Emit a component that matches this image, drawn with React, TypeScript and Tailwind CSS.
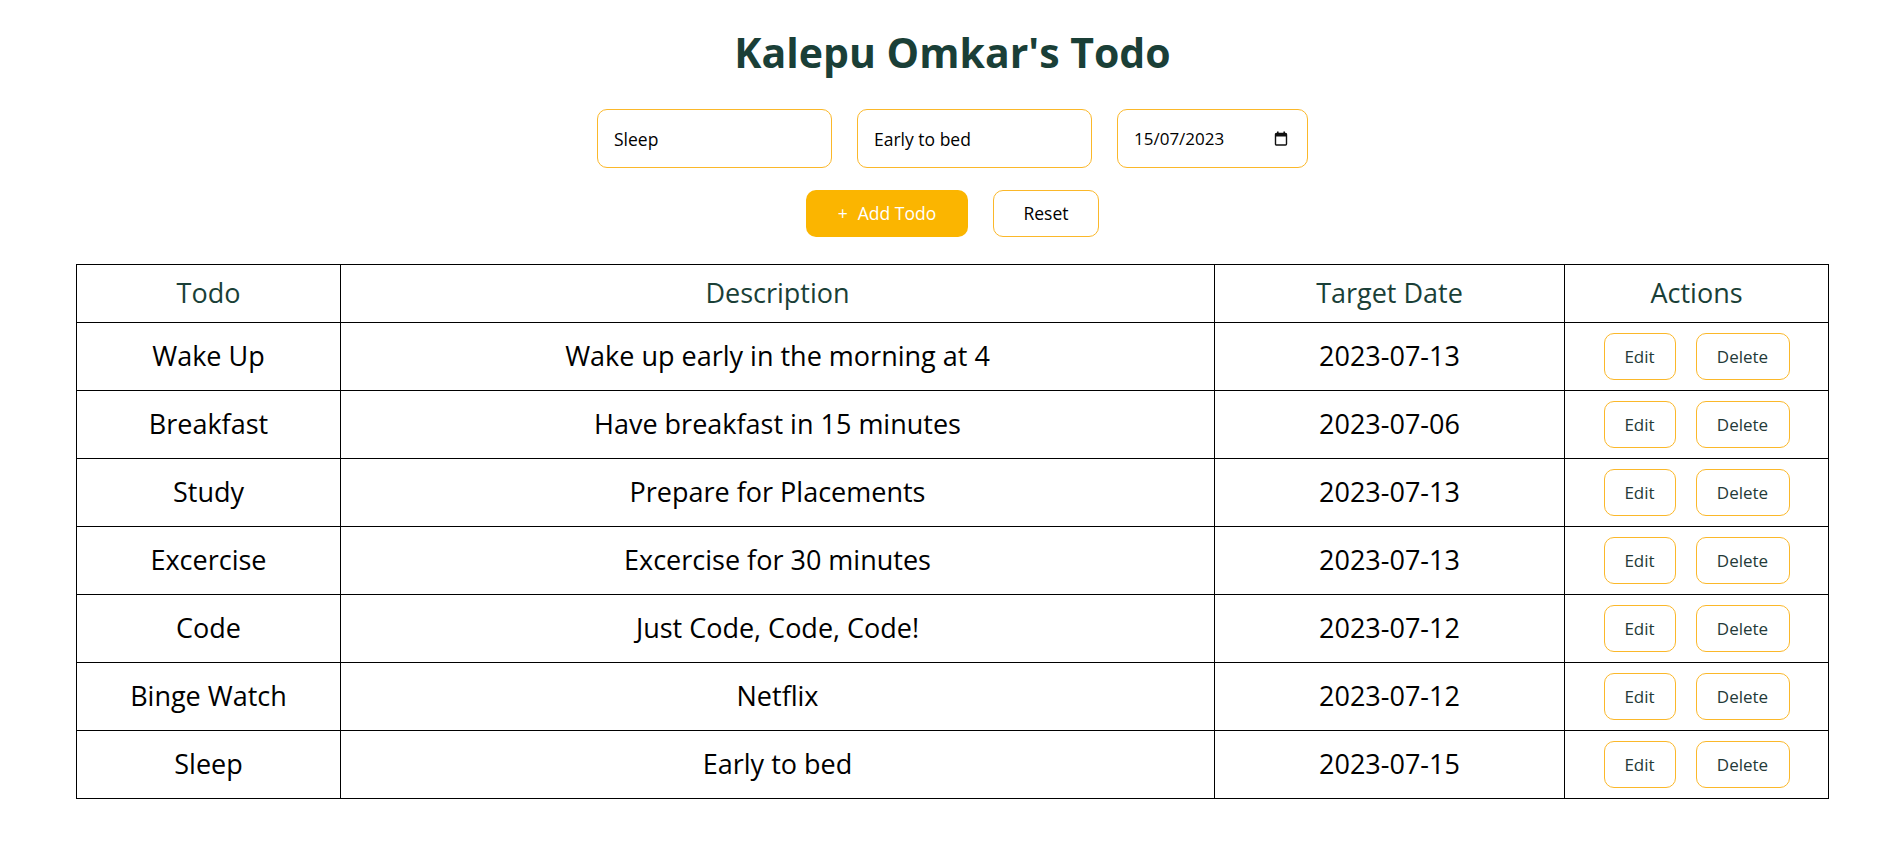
import React from "react";

const rows = [
  { todo: "Wake Up", desc: "Wake up early in the morning at 4", date: "2023-07-13" },
  { todo: "Breakfast", desc: "Have breakfast in 15 minutes", date: "2023-07-06" },
  { todo: "Study", desc: "Prepare for Placements", date: "2023-07-13" },
  { todo: "Excercise", desc: "Excercise for 30 minutes", date: "2023-07-13" },
  { todo: "Code", desc: "Just Code, Code, Code!", date: "2023-07-12" },
  { todo: "Binge Watch", desc: "Netflix", date: "2023-07-12" },
  { todo: "Sleep", desc: "Early to bed", date: "2023-07-15" },
];

function CalendarIcon() {
  return (
    <svg width="14" height="15" viewBox="0 0 14 15" fill="none">
      <rect x="1.5" y="2.5" width="11" height="11.5" rx="1" stroke="#111" strokeWidth="1.4" />
      <rect x="1.5" y="2.5" width="11" height="3" fill="#111" />
      <rect x="3" y="0.5" width="1.6" height="3" fill="#111" />
      <rect x="9.4" y="0.5" width="1.6" height="3" fill="#111" />
    </svg>
  );
}

export default function App() {
  return (
    <div
      className="min-h-screen bg-white pl-2 pt-[28px]"
      style={{ fontFamily: "'Open Sans', 'Noto Sans', sans-serif" }}
    >
      <h1 className="text-center text-[41px] leading-[48px] font-bold text-[#1a3f37]">
        Kalepu Omkar's Todo
      </h1>

      <div className="mt-[33px] flex justify-center gap-[25px]">
        <input
          readOnly
          value="Sleep"
          className="h-[59px] w-[235px] rounded-[10px] border border-[#fbb82a] px-[16px] text-[17.5px] text-black outline-none"
        />
        <input
          readOnly
          value="Early to bed"
          className="h-[59px] w-[235px] rounded-[10px] border border-[#fbb82a] px-[16px] text-[17.5px] text-black outline-none"
        />
        <div className="flex h-[59px] w-[191px] items-center justify-between rounded-[10px] border border-[#fbb82a] pl-[16px] pr-[19px] text-[17px] text-black">
          <span>15/07/2023</span>
          <CalendarIcon />
        </div>
      </div>

      <div className="mt-[22px] flex justify-center gap-[25px]">
        <button className="flex h-[47px] w-[162px] items-center justify-center gap-[10px] rounded-[10px] bg-[#fbb500] text-[17.5px] text-white">
          <span>+</span>
          <span>Add Todo</span>
        </button>
        <button className="h-[47px] w-[106px] rounded-[10px] border border-[#fbb82a] bg-white text-[17.5px] text-black">
          Reset
        </button>
      </div>

      <div className="mt-[27px] flex justify-center">
        <table className="w-[1752px] table-fixed border-collapse">
          <colgroup>
            <col className="w-[264px]" />
            <col className="w-[874px]" />
            <col className="w-[350px]" />
            <col className="w-[264px]" />
          </colgroup>
          <thead>
            <tr className="h-[58px]">
              {["Todo", "Description", "Target Date", "Actions"].map((h) => (
                <th
                  key={h}
                  className="border border-black p-0 pb-[1px] text-center text-[27px] leading-[36px] font-medium text-[#1a3f37]"
                >
                  {h}
                </th>
              ))}
            </tr>
          </thead>
          <tbody>
            {rows.map((r, i) => (
              <tr key={i} className="h-[68px]">
                <td className="border border-black p-0 pb-[2px] text-center text-[27px] leading-[36px] text-black">{r.todo}</td>
                <td className="border border-black p-0 pb-[2px] text-center text-[27px] leading-[36px] text-black">{r.desc}</td>
                <td className="border border-black p-0 pb-[2px] text-center text-[27px] leading-[36px] text-black">{r.date}</td>
                <td className="border border-black p-0 text-center">
                  <div className="flex items-center justify-center gap-[20px]">
                    <button className="h-[47px] w-[72px] rounded-[10px] border border-[#fbb82a] bg-white text-[17px] text-[#243a38]">
                      Edit
                    </button>
                    <button className="h-[47px] w-[94px] rounded-[10px] border border-[#fbb82a] bg-white text-[17px] text-[#243a38]">
                      Delete
                    </button>
                  </div>
                </td>
              </tr>
            ))}
          </tbody>
        </table>
      </div>
    </div>
  );
}
